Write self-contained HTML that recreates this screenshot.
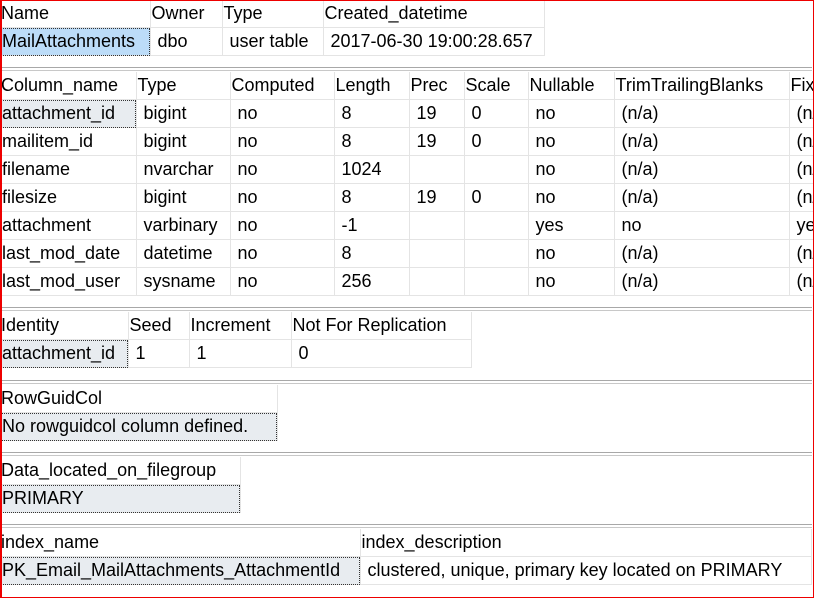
<!DOCTYPE html>
<html><head><style>
body{margin:0;width:814px;height:599px;overflow:hidden;background:#fff;position:relative;font-family:"Liberation Sans",sans-serif;font-size:18px;color:#000}
.frame{position:absolute;left:0;top:0;width:811px;height:596px;border:1px solid #e00;border-left-width:2px;border-right-width:2px;box-sizing:content-box}
table{position:absolute;left:0;border-collapse:collapse;table-layout:fixed}
td{height:27px;padding:0;border-right:1px solid #e4e4e4;border-bottom:1px solid #e4e4e4;white-space:nowrap;overflow:hidden;line-height:27px;box-sizing:border-box}
tr.h td{padding-left:1px}
tr.d td{padding-left:7px}
tr.d td:first-child{padding-left:2px}
td.sel{background:#bcdcf8;outline:1px dotted #333;outline-offset:-1px}
td.gs{background:#e8ecf0;outline:1px dotted #333;outline-offset:-1px}
.sep{position:absolute;left:0;width:812px;height:2px;border-top:1px solid #a8a8a8;border-bottom:1px solid #c8c8c8}
</style></head><body>
<table style="top:0;width:544px"><colgroup><col style="width:150px"><col style="width:72px"><col style="width:101px"><col style="width:221px"></colgroup>
<tr class="h"><td>Name</td><td>Owner</td><td>Type</td><td>Created_datetime</td></tr>
<tr class="d"><td class="sel">MailAttachments</td><td>dbo</td><td>user table</td><td>2017-06-30 19:00:28.657</td></tr></table>
<div class="sep" style="top:67px"></div>
<table style="top:72px;width:829px"><colgroup><col style="width:136px"><col style="width:94px"><col style="width:104px"><col style="width:75px"><col style="width:55px"><col style="width:64px"><col style="width:86px"><col style="width:175px"><col style="width:40px"></colgroup>
<tr class="h"><td>Column_name</td><td>Type</td><td>Computed</td><td>Length</td><td>Prec</td><td>Scale</td><td>Nullable</td><td>TrimTrailingBlanks</td><td>Fix</td></tr>
<tr class="d"><td class="gs">attachment_id</td><td>bigint</td><td>no</td><td>8</td><td>19</td><td>0</td><td>no</td><td>(n/a)</td><td>(n/a)</td></tr>
<tr class="d"><td>mailitem_id</td><td>bigint</td><td>no</td><td>8</td><td>19</td><td>0</td><td>no</td><td>(n/a)</td><td>(n/a)</td></tr>
<tr class="d"><td>filename</td><td>nvarchar</td><td>no</td><td>1024</td><td></td><td></td><td>no</td><td>(n/a)</td><td>(n/a)</td></tr>
<tr class="d"><td>filesize</td><td>bigint</td><td>no</td><td>8</td><td>19</td><td>0</td><td>no</td><td>(n/a)</td><td>(n/a)</td></tr>
<tr class="d"><td>attachment</td><td>varbinary</td><td>no</td><td>-1</td><td></td><td></td><td>yes</td><td>no</td><td>yes</td></tr>
<tr class="d"><td>last_mod_date</td><td>datetime</td><td>no</td><td>8</td><td></td><td></td><td>no</td><td>(n/a)</td><td>(n/a)</td></tr>
<tr class="d"><td>last_mod_user</td><td>sysname</td><td>no</td><td>256</td><td></td><td></td><td>no</td><td>(n/a)</td><td>(n/a)</td></tr></table>
<div class="sep" style="top:307px"></div>
<table style="top:312px;width:471px"><colgroup><col style="width:128px"><col style="width:61px"><col style="width:102px"><col style="width:180px"></colgroup>
<tr class="h"><td>Identity</td><td>Seed</td><td>Increment</td><td>Not For Replication</td></tr>
<tr class="d"><td class="gs">attachment_id</td><td>1</td><td>1</td><td>0</td></tr></table>
<div class="sep" style="top:380px"></div>
<table style="top:385px;width:277px"><colgroup><col style="width:277px"></colgroup>
<tr class="h"><td>RowGuidCol</td></tr>
<tr class="d"><td class="gs">No rowguidcol column defined.</td></tr></table>
<div class="sep" style="top:452px"></div>
<table style="top:457px;width:240px"><colgroup><col style="width:240px"></colgroup>
<tr class="h"><td>Data_located_on_filegroup</td></tr>
<tr class="d"><td class="gs">PRIMARY</td></tr></table>
<div class="sep" style="top:524px"></div>
<table style="top:529px;width:811px"><colgroup><col style="width:360px"><col style="width:451px"></colgroup>
<tr class="h"><td>index_name</td><td>index_description</td></tr>
<tr class="d"><td class="gs">PK_Email_MailAttachments_AttachmentId</td><td>clustered, unique, primary key located on PRIMARY</td></tr></table>
<div class="frame"></div>
</body></html>
